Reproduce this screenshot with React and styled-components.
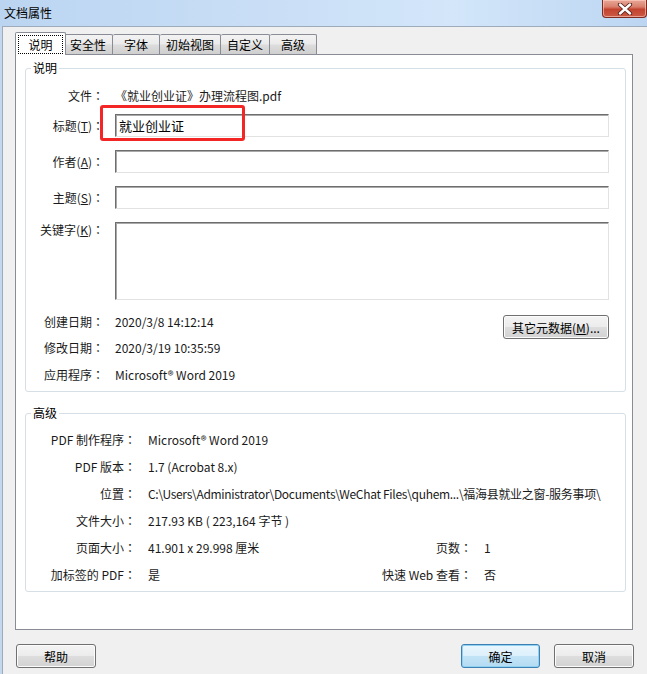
import React from "react";
import styled, { createGlobalStyle } from "styled-components";

const GlobalStyle = createGlobalStyle`
  html, body {
    margin: 0;
    padding: 0;
  }
  body {
    font-family: "Noto Sans CJK SC", "Noto Sans", sans-serif;
    font-size: 12px;
    color: #1a1a1a;
    background: #f0f0f0;
  }
`;

const Window = styled.div`
  width: 647px;
  height: 674px;
  display: flex;
  flex-direction: column;
  overflow: hidden;
  background: #c3d8ef;
`;

const TitleBar = styled.div`
  height: 26px;
  flex: none;
  display: flex;
  justify-content: space-between;
  align-items: flex-start;
  background: linear-gradient(to right, #bbd5f1 0%, #c9def6 40%, #d3e6fa 70%, #bcd6f2 100%);
`;

const Title = styled.div`
  padding: 5px 0 0 4px;
  line-height: 16px;
  color: #000;
`;

const CloseButton = styled.div`
  width: 45px;
  height: 18px;
  box-sizing: border-box;
  border: 1px solid #7d2a20;
  border-top: none;
  border-radius: 0 0 4px 4px;
  background: linear-gradient(#e9a898 0%, #d9806d 40%, #c2432f 55%, #cc5a44 100%);
  box-shadow: inset 0 0 0 1px rgba(255, 210, 200, 0.6);
  display: flex;
  align-items: center;
  justify-content: center;
`;

const Client = styled.div`
  flex: 1;
  margin-left: 2px;
  border-left: 1px solid #9eabbb;
  border-top: 1px solid #9eabbb;
  background: #f0f0f0;
  display: flex;
  flex-direction: column;
  padding: 5px 14px 0 12px;
  min-height: 0;
`;

const TabRow = styled.div`
  height: 22px;
  flex: none;
  display: flex;
  align-items: flex-end;
  padding-left: 2px;
  position: relative;
  z-index: 1;
`;

const Tab = styled.div`
  box-sizing: border-box;
  min-width: ${(p) => (p.$active ? 51 : 47)}px;
  height: ${(p) => (p.$active ? 23 : 20)}px;
  margin: ${(p) => (p.$active ? "0 -2px -1px -2px" : "0")};
  padding: ${(p) => (p.$active ? "2px 2px 1px" : "0 6px")};
  border: 1px solid #898c95;
  border-bottom: none;
  border-left: ${(p) => (p.$first || p.$active ? "1px solid #898c95" : "none")};
  border-radius: 2px 2px 0 0;
  background: ${(p) =>
    p.$active
      ? "#ffffff"
      : "linear-gradient(#f3f3f3 0%, #ebebeb 45%, #dcdcdc 55%, #cfcfcf 100%)"};
  display: flex;
  align-items: center;
  justify-content: center;
  line-height: 16px;
  color: #000;
  white-space: nowrap;
  position: relative;
  z-index: ${(p) => (p.$active ? 2 : 1)};
`;

const FocusRect = styled.span`
  flex: 1;
  align-self: stretch;
  border: 1px dotted #000;
  display: flex;
  align-items: center;
  justify-content: center;
  padding: 0 4px;
`;

const Panel = styled.div`
  flex: 1;
  border: 1px solid #898c95;
  background: #ffffff;
  display: flex;
  flex-direction: column;
  padding: 5px 6px 0 9px;
  min-height: 0;
`;

const Group = styled.fieldset`
  margin: ${(p) => p.$mt || 0}px 0 0 0;
  padding: 0 16px 6px 0;
  min-width: 0;
  border: 1px solid #d5dfe5;
  border-radius: 3px;
  display: flex;
  flex-direction: column;
`;

const Legend = styled.legend`
  margin-left: 5px;
  padding: 0 2px;
  line-height: 16px;
  color: #000;
`;

const FormRow = styled.div`
  display: grid;
  grid-template-columns: 78px 1fr auto;
  column-gap: 11px;
  align-items: ${(p) => p.$align || "center"};
  margin-top: ${(p) => p.$mt || 0}px;
  position: relative;
`;

const InfoRow = styled.div`
  display: grid;
  grid-template-columns: 110px 200px 112px 1fr;
  column-gap: 12px;
  height: 20px;
  align-items: center;
  margin-top: ${(p) => p.$mt || 0}px;
`;

const Label = styled.div`
  text-align: right;
  line-height: ${(p) => p.$lh || 20}px;
  white-space: nowrap;
  color: #1a1a1a;
`;

const Colon = styled.span`
  font-family: "Noto Sans CJK JP", "Noto Sans CJK SC", sans-serif;
`;

const Value = styled.div`
  line-height: 20px;
  white-space: nowrap;
  overflow: hidden;
  grid-column: ${(p) => p.$span || "auto"};
  letter-spacing: ${(p) => p.$tight || 0}px;
  color: #1a1a1a;
`;

const TextBox = styled.div`
  grid-column: 2 / 4;
  box-sizing: border-box;
  height: ${(p) => p.$h || 23}px;
  background: #ffffff;
  border: 1px solid;
  border-color: #6e6e6e #e2e2e2 #e2e2e2 #6e6e6e;
  box-shadow: inset 1px 1px 0 #a9a9a9;
  padding: 0 3px;
  display: flex;
  align-items: center;
  font-size: 13px;
  color: #000;
`;

const Highlight = styled.div`
  position: absolute;
  left: 74px;
  top: -9px;
  width: 145px;
  height: 36px;
  box-sizing: border-box;
  border: 3px solid #f42525;
  border-radius: 3px;
  pointer-events: none;
`;

const Button = styled.button`
  box-sizing: border-box;
  width: ${(p) => p.$w || 80}px;
  height: 24px;
  padding: 0;
  font-family: inherit;
  font-size: 12px;
  color: #000;
  border: 1px solid ${(p) => (p.$primary ? "#3c7fb1" : "#707070")};
  border-radius: 3px;
  background: ${(p) =>
    p.$primary
      ? "linear-gradient(#eaf6fd 0%, #dcf0fb 48%, #c3e4f7 52%, #b4dbf2 100%)"
      : "linear-gradient(#f4f4f4 0%, #ececec 48%, #dddddd 52%, #d2d2d2 100%)"};
  box-shadow: inset 0 0 0 1px ${(p) => (p.$primary ? "#8fd0f3" : "#fcfcfc")};
  margin-top: ${(p) => p.$mt || 0}px;
  margin-bottom: ${(p) => p.$mb || 0}px;
`;

const ButtonRow = styled.div`
  flex: none;
  display: flex;
  gap: 14px;
  margin: 14px -1px 6px 1px;
`;

const Spacer = styled.div`
  flex: 1;
`;

const Mn = ({ children }) => <u>{children}</u>;

export default function App() {
  return (
    <>
      <GlobalStyle />
      <Window>
        <TitleBar>
          <Title>文档属性</Title>
          <CloseButton>
            <svg width="16" height="12" viewBox="0 0 16 12">
              <path d="M3 1.5 L13 10.5 M13 1.5 L3 10.5" stroke="#5a2019" strokeWidth="4.2" strokeLinecap="round" />
              <path d="M3 1.5 L13 10.5 M13 1.5 L3 10.5" stroke="#ffffff" strokeWidth="2.4" strokeLinecap="round" />
            </svg>
          </CloseButton>
        </TitleBar>
        <Client>
          <TabRow>
            <Tab $active $first>
              <FocusRect>说明</FocusRect>
            </Tab>
            <Tab>安全性</Tab>
            <Tab>字体</Tab>
            <Tab>初始视图</Tab>
            <Tab>自定义</Tab>
            <Tab>高级</Tab>
          </TabRow>
          <Panel>
            <Group>
              <Legend>说明</Legend>
              <FormRow $mt={10}>
                <Label>
                  文件<Colon>：</Colon>
                </Label>
                <Value>《就业创业证》办理流程图.pdf</Value>
              </FormRow>
              <FormRow $mt={8}>
                <Label>
                  标题(<Mn>T</Mn>)<Colon>：</Colon>
                </Label>
                <TextBox>就业创业证</TextBox>
                <Highlight />
              </FormRow>
              <FormRow $mt={13}>
                <Label>
                  作者(<Mn>A</Mn>)<Colon>：</Colon>
                </Label>
                <TextBox />
              </FormRow>
              <FormRow $mt={13}>
                <Label>
                  主题(<Mn>S</Mn>)<Colon>：</Colon>
                </Label>
                <TextBox />
              </FormRow>
              <FormRow $mt={13} $align="start">
                <Label $lh={16}>
                  关键字(<Mn>K</Mn>)<Colon>：</Colon>
                </Label>
                <TextBox $h={78} />
              </FormRow>
              <FormRow $mt={12} $align="start">
                <Label>
                  创建日期<Colon>：</Colon>
                </Label>
                <Value>2020/3/8 14:12:14</Value>
                <Button $w={106} $mt={3} $mb={-1}>
                  其它元数据(<Mn>M</Mn>)...
                </Button>
              </FormRow>
              <FormRow>
                <Label>
                  修改日期<Colon>：</Colon>
                </Label>
                <Value>2020/3/19 10:35:59</Value>
              </FormRow>
              <FormRow $mt={7}>
                <Label>
                  应用程序<Colon>：</Colon>
                </Label>
                <Value>Microsoft® Word 2019</Value>
              </FormRow>
            </Group>

            <Group $mt={13}>
              <Legend>高级</Legend>
              <InfoRow $mt={9}>
                <Label>
                  PDF 制作程序<Colon>：</Colon>
                </Label>
                <Value $span="2 / 5">Microsoft® Word 2019</Value>
              </InfoRow>
              <InfoRow $mt={7}>
                <Label>
                  PDF 版本<Colon>：</Colon>
                </Label>
                <Value $span="2 / 5">1.7 (Acrobat 8.x)</Value>
              </InfoRow>
              <InfoRow $mt={7}>
                <Label>
                  位置<Colon>：</Colon>
                </Label>
                <Value $span="2 / 5" $tight={-0.3}>
                  {"C:\\Users\\Administrator\\Documents\\WeChat Files\\quhem...\\福海县就业之窗-服务事项\\"}
                </Value>
              </InfoRow>
              <InfoRow $mt={7}>
                <Label>
                  文件大小<Colon>：</Colon>
                </Label>
                <Value $span="2 / 5">217.93 KB ( 223,164 字节 )</Value>
              </InfoRow>
              <InfoRow $mt={7}>
                <Label>
                  页面大小<Colon>：</Colon>
                </Label>
                <Value>41.901 x 29.998 厘米</Value>
                <Label>
                  页数<Colon>：</Colon>
                </Label>
                <Value>1</Value>
              </InfoRow>
              <InfoRow $mt={7}>
                <Label>
                  加标签的 PDF<Colon>：</Colon>
                </Label>
                <Value>是</Value>
                <Label>
                  快速 Web 查看<Colon>：</Colon>
                </Label>
                <Value>否</Value>
              </InfoRow>
            </Group>
          </Panel>
          <ButtonRow>
            <Button>帮助</Button>
            <Spacer />
            <Button $primary $w={79}>
              确定
            </Button>
            <Button>取消</Button>
          </ButtonRow>
        </Client>
      </Window>
    </>
  );
}
